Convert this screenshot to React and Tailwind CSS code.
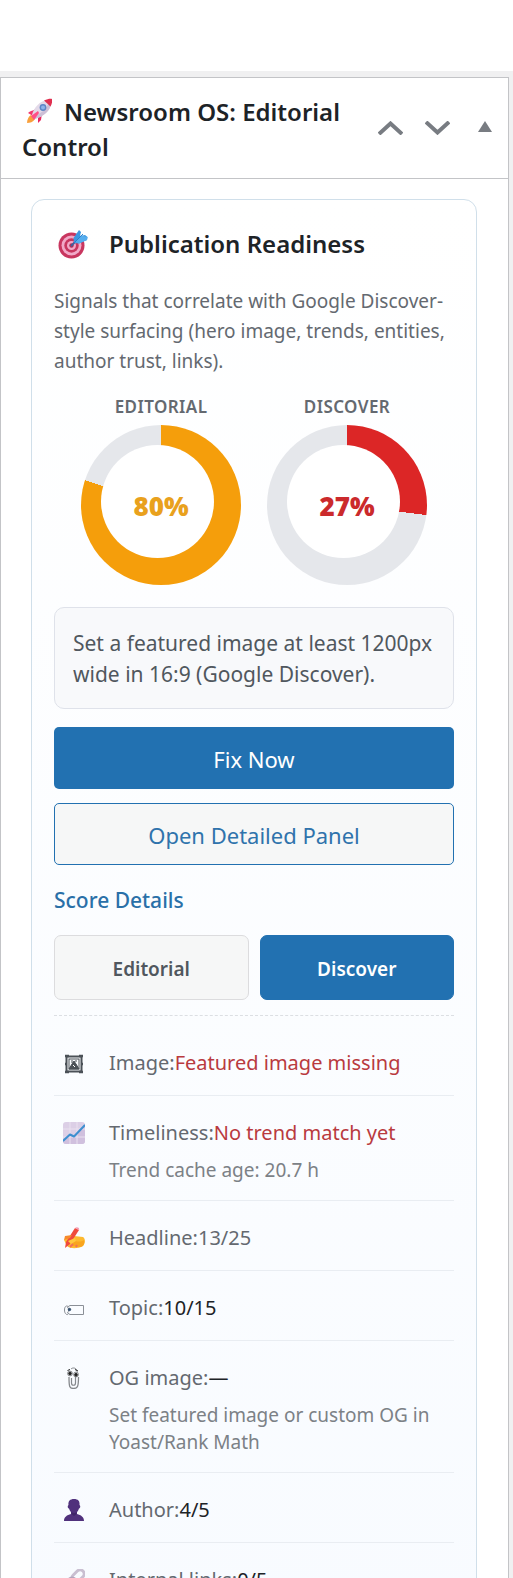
import React, { useState } from "react";

const RocketIcon = () => (
  <svg viewBox="0 0 26 26" className="mr-3 ml-1 inline-block size-[26px] align-[-3px]" aria-hidden="true">
    <path d="M5 14 L11 10 L14 13 L7 16 Z" fill="#f2386f" />
    <path d="M12 18 L16 15 L15 22 L12 25 Z" fill="#e8265f" />
    <path d="M1 25 C1 21 3 18 5 17 L9 21 C7 24 4 25 1 25 Z" fill="#f9a03c" />
    <path d="M2 15 C4 13 7 12 9 13 L7 18 Z" fill="#f2386f" />
    <path d="M6 17 C8 9 14 3 21 2 L25 6 C24 13 18 18 9 21 Z" fill="#e3d9e8" />
    <path d="M9 21 C18 18 24 13 25 6 L23 4 C20 12 14 16 7 19 Z" fill="#cdbfd6" />
    <path d="M18 2.500 C22 0.500 25 0.500 26 1 C26.500 3 26 6 24.500 8.500 Z" fill="#e02f4f" />
    <path d="M5 18 L12 13 L13 15 L8 22 Z" fill="#ff4f86" />
    <circle cx="17" cy="9.500" r="3.400" fill="#5c86c5" />
    <circle cx="17" cy="9.500" r="2" fill="#8db4ea" />
  </svg>
);

const TargetIcon = () => (
  <svg viewBox="0 0 30 30" className="size-[30px]" aria-hidden="true">
    <circle cx="13.500" cy="16.500" r="13" fill="#c8365f" />
    <circle cx="13.500" cy="16.500" r="10" fill="#f1a9c8" />
    <circle cx="13.500" cy="16.500" r="7.200" fill="#c8365f" />
    <circle cx="13.500" cy="16.500" r="4.500" fill="#f1a9c8" />
    <circle cx="13.500" cy="16.500" r="2.200" fill="#b32c55" />
    <path d="M13 17 L20 10" stroke="#3f5f9c" strokeWidth="2" />
    <path d="M16 14 L15.500 9 L21 1 L23 3 L22 7 L27 6 L29.500 8 L29 11 L21 14.500 Z" fill="#3c97e0" />
    <path d="M17 13 L23 6.500 L29.500 8 L29 11 L21 14.500 Z" fill="#55adee" />
    <path d="M16 14 L25 5" stroke="#2b7fca" />
  </svg>
);

const FrameIcon = () => (
  <svg viewBox="0 0 22 22" className="size-[22px]" fill="none" stroke="#4b5157" aria-hidden="true">
    <rect x="3.500" y="4.500" width="15" height="15" strokeWidth="2" />
    <rect x="6" y="7" width="10" height="10" strokeWidth="1" />
    <path d="M2 4h4M16 4h4M2 20h4M16 20h4M2 12h2M18 12h2" strokeWidth="2.500" />
    <path d="M6 17 L9 12 L11 9 L13 12 L16 17 Z" fill="#4b5157" />
    <path d="M10 13 L12 15" stroke="#fff" />
    <path d="M9 8v3M13 8v2" />
  </svg>
);

const TrendIcon = () => (
  <svg viewBox="0 0 22 22" className="size-[22px]" aria-hidden="true">
    <rect width="22" height="22" rx="3" fill="#dccfe6" />
    <path d="M0 17 L7 13 L11 14 L22 3 V19 a3 3 0 0 1 -3 3 H3 a3 3 0 0 1 -3 -3 Z" fill="#d0c0de" />
    <path d="M7 0v22M14 0v22M0 7h22M0 15h22" stroke="#e9e0ef" />
    <path d="M0.500 18.500 L7 12.500 L11 14.500 L21.500 3.500" fill="none" stroke="#3e8fd0" strokeWidth="2" strokeLinecap="round" strokeLinejoin="round" />
  </svg>
);

const WritingIcon = () => (
  <svg viewBox="0 0 22 22" className="size-[22px]" aria-hidden="true">
    <path d="M1 13 C3 9 7 8 11 9 L20 10 C23 12 22 17 20 19 C15 22 7 22 4 19 Z" fill="#fdb92f" />
    <path d="M10 13 C14 15 18 15 21 13 C22 17 20 20 17 20 L9 19 Z" fill="#f9a51e" />
    <path d="M12 1 L16 3 L7 17 L2 21 L3 15 Z" fill="#ef4a3c" />
    <path d="M12 1 C14 -1 17 1 16 3 Z" fill="#f49ab4" />
    <path d="M2 9 L9 8 L7 11 L1 13 Z" fill="#f78b2c" />
    <path d="M5 14 L12 11 L13 14 L8 17 Z" fill="#ffc83d" />
    <path d="M7 20 L10 17 M13 20 L14 18" stroke="#f0715a" strokeWidth="2" />
  </svg>
);

const TagIcon = () => (
  <svg viewBox="0 0 22 22" className="size-[22px]" fill="none" stroke="#8a8f96" aria-hidden="true">
    <path d="M4.500 10 L7 8.500 H20.500 V17.500 H7 L4.500 16" />
    <path d="M5 9.500 C3 8 1.500 10 1.500 13 C1.500 16 3 18 5 17.500" />
    <path d="M4.500 10 C6 12 6 14 4.500 16" />
    <circle cx="6.500" cy="12.500" r="1.200" fill="#34506e" stroke="#34506e" />
  </svg>
);

const ClipIcon = () => (
  <svg viewBox="0 0 22 22" className="size-[22px]" fill="none" stroke="#85888c" aria-hidden="true">
    <path d="M6 10 C6 20 6.500 21.500 10.500 21.500 C14.500 21.500 15.500 20 15.500 10" strokeWidth="1.300" />
    <path d="M8.500 11 V16 C8.500 19 12.500 19 12.500 16 V10" strokeWidth="1.200" />
    <path d="M8 2 C10 0 14 1 14 4.500" />
    <circle cx="7" cy="6.500" r="2.400" fill="#e9eaec" />
    <circle cx="13" cy="7.500" r="2.400" fill="#e9eaec" />
    <circle cx="7" cy="6.500" r="1.300" fill="#222" stroke="#222" />
    <circle cx="13" cy="7.800" r="1.300" fill="#222" stroke="#222" />
    <path d="M4.500 3.500 L7 2.500 M12 2.500 L15 4" stroke="#222" />
  </svg>
);

const PersonIcon = () => (
  <svg viewBox="0 0 22 22" className="size-[22px]" fill="#50317c" aria-hidden="true">
    <path d="M11 0 C15 0 17 2 16.500 6 C18 7 17 9.500 16 9.500 C15 12.500 13.500 13.500 13 14 H9 C8.500 13.500 7 12.500 6 9.500 C5 9.500 4 7 5.500 6 C5 2 7 0 11 0 Z" />
    <path d="M8 13 H14 V15 C18 16 21 18 21 22 H1 C1 18 4 16 8 15 Z" />
    <path d="M8.500 13 C10 14.500 12 14.500 13.500 13 V15 L11 17 L8.500 15 Z" fill="#3f2568" />
  </svg>
);

const LinkIcon = () => (
  <svg viewBox="0 0 22 22" className="size-[22px]" fill="none" strokeWidth="3" aria-hidden="true">
    <rect x="8" y="3" width="14" height="8" rx="4" transform="rotate(-45 15 7)" stroke="#c9bfd1" />
    <rect x="0" y="11" width="14" height="8" rx="4" transform="rotate(-45 7 15)" stroke="#b3a6bd" />
  </svg>
);

const gauges = [
  { label: "Editorial", value: 80, color: "#f59e0b", text: "text-[#e9a11d]" },
  { label: "Discover", value: 27, color: "#dc2626", text: "text-[#cb2a2c]" },
];

const signals = [
  { label: "Image", value: "Featured image missing", tone: "text-[#b93a3e]", Icon: FrameIcon },
  {
    label: "Timeliness",
    value: "No trend match yet",
    tone: "text-[#b93a3e]",
    note: "Trend cache age: 20.7 h",
    Icon: TrendIcon,
  },
  { label: "Headline", value: "13/25", tone: "text-[#646970]", Icon: WritingIcon },
  { label: "Topic", value: "10/15", tone: "text-[#1d2327]", Icon: TagIcon },
  {
    label: "OG image",
    value: "—",
    tone: "text-[#1d2327]",
    note: "Set featured image or custom OG in Yoast/Rank Math",
    Icon: ClipIcon,
  },
  { label: "Author", value: "4/5", tone: "text-[#1d2327]", Icon: PersonIcon },
  { label: "Internal links", value: "0/5", tone: "text-[#1d2327]", Icon: LinkIcon },
];

const Gauge = ({ label, value, color, text }) => (
  <div className="flex flex-col items-center">
    <span className="text-[17px] leading-6 font-semibold tracking-wide text-[#646970] uppercase">
      {label}
    </span>
    <div
      className="mt-1.5 grid size-40 rounded-full"
      style={{ background: `conic-gradient(${color} ${value}%, #e5e7eb 0)` }}
    >
      <div className="col-start-1 row-start-1 mt-5 ml-5 size-[113px] rounded-full bg-white" />
      <strong
        className={`col-start-1 row-start-1 place-self-center pt-0.5 text-[26px] leading-8 font-black ${text}`}
      >
        {value}%
      </strong>
    </div>
  </div>
);

const Signal = ({ label, value, tone, note, Icon }) => (
  <li className="flex min-h-[70px] border-b border-[#e9edf2] pt-[22px] pb-4">
    <span className="flex h-[29px] w-[55px] shrink-0 items-center pl-[9px]">
      <Icon />
    </span>
    <div>
      <p className="text-[20px] leading-[29px] text-[#646970]">
        {label}:<span className={tone}>{value}</span>
      </p>
      {note && (
        <p className="mt-2.5 text-[19px] leading-[27px] text-[#7c8186]">{note}</p>
      )}
    </div>
  </li>
);

export default function App() {
  const [open, setOpen] = useState(true);
  const [tab, setTab] = useState("Discover");

  return (
    <main className="h-screen overflow-hidden bg-[#f0f0f1] font-['Noto_Sans',sans-serif]">
      <div className="h-[71px] bg-white" />

      <section className="mt-1.5 mr-1 border border-[#c3c4c7] bg-white">
        <header className="flex items-center border-b border-[#c3c4c7] pl-[21px]">
          <h2 className="flex-1 pt-4 pb-3.5 text-[24px] leading-[35px] font-semibold text-[#1d2327]">
            <RocketIcon />
            Newsroom OS: Editorial Control
          </h2>
          <div className="flex items-center text-[#787c82]">
            <button aria-label="Move up" className="flex w-[47px] justify-center">
              <svg viewBox="0 0 25 14" className="h-3.5 w-[25px]" fill="none" stroke="currentColor" strokeWidth="4">
                <path d="M1 13 L12.500 2.500 L24 13" />
              </svg>
            </button>
            <button aria-label="Move down" className="flex w-[47px] justify-center">
              <svg viewBox="0 0 25 14" className="h-3.5 w-[25px]" fill="none" stroke="currentColor" strokeWidth="4">
                <path d="M1 1 L12.500 11.500 L24 1" />
              </svg>
            </button>
            <button
              aria-label="Toggle panel"
              aria-expanded={open}
              onClick={() => setOpen(!open)}
              className="flex w-[47px] justify-center pb-1"
            >
              <svg viewBox="0 0 14 11" className="h-[11px] w-3.5" fill="currentColor">
                <path d="M7 0 L14 11 H0 Z" />
              </svg>
            </button>
          </div>
        </header>

        {open && (
          <div className="pt-5 pr-[31px] pl-[30px]">
            <div className="rounded-[13px] border border-[#d0dfea] bg-linear-to-b from-white to-[#f8fbff] px-[22px] pt-6 pb-6">
              <h3 className="flex items-center text-[24px] leading-[40px] font-semibold text-[#1d2327]">
                <span className="w-[55px] shrink-0 pl-1">
                  <TargetIcon />
                </span>
                Publication Readiness
              </h3>

              <p className="mt-[22px] text-[19px] leading-[30px] text-[#646970]">
                Signals that correlate with Google Discover-style surfacing (hero
                image, trends, entities, author trust, links).
              </p>

              <div className="mt-[19px] flex justify-center gap-[26px]">
                {gauges.map((gauge) => (
                  <Gauge key={gauge.label} {...gauge} />
                ))}
              </div>

              <p className="mt-[22px] rounded-[10px] border border-[#dfe2ea] bg-[#f8f9fb] px-[18px] pt-5 pb-[18px] text-[21px] leading-[31px] text-[#50575e]">
                Set a featured image at least 1200px wide in 16:9 (Google
                Discover).
              </p>

              <button className="mt-[18px] block h-[62px] w-full rounded-[5px] bg-[#2271b1] pt-0.5 text-[22px] text-white">
                Fix Now
              </button>
              <button className="mt-3.5 block h-[62px] w-full rounded-[5px] border border-[#2271b1] bg-[#f6f7f7] pt-0.5 text-[22px] text-[#2f73ac]">
                Open Detailed Panel
              </button>

              <h4 className="mt-5 text-[21px] leading-[30px] font-medium text-[#2a70a8]">
                Score Details
              </h4>

              <div className="mt-5 grid grid-cols-2 gap-[11px]">
                {["Editorial", "Discover"].map((item) => (
                  <button
                    key={item}
                    aria-pressed={tab === item}
                    onClick={() => setTab(item)}
                    className={`h-[65px] rounded-[7px] border pt-1 text-[19px] font-semibold ${
                      tab === item
                        ? "border-[#2271b1] bg-[#2271b1] text-white"
                        : "border-[#dcdcde] bg-[#f6f7f7] text-[#50575e]"
                    }`}
                  >
                    {item}
                  </button>
                ))}
              </div>

              <ul className="mt-[15px] border-t border-dashed border-[#dcdfe3] pt-2.5">
                {signals.map((signal) => (
                  <Signal key={signal.label} {...signal} />
                ))}
              </ul>
            </div>
          </div>
        )}
      </section>
    </main>
  );
}
